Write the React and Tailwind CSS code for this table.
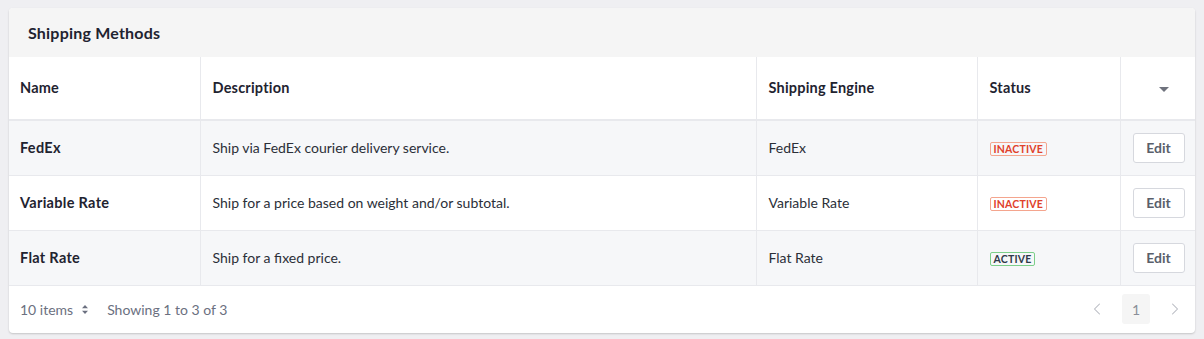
import { ChevronLeft, ChevronRight } from "lucide-react"

const ROWS = [
  { name: "FedEx", desc: "Ship via FedEx courier delivery service.", engine: "FedEx", active: false },
  { name: "Variable Rate", desc: "Ship for a price based on weight and/or subtotal.", engine: "Variable Rate", active: false },
  { name: "Flat Rate", desc: "Ship for a fixed price.", engine: "Flat Rate", active: true },
]

function StatusBadge({ active }) {
  if (active) {
    return (
      <span className="inline-block rounded-[2px] border border-[#7ccf8a] px-[3px] text-[10.5px] leading-[12px] font-bold tracking-[0.2px] text-[#2f3a4a]">
        ACTIVE
      </span>
    )
  }
  return (
    <span className="inline-block rounded-[2px] border border-[#f4a58e] px-[3px] text-[10.5px] leading-[12px] font-bold tracking-[0.2px] text-[#e0412b]">
      INACTIVE
    </span>
  )
}

export default function App() {
  return (
    <div className="min-h-[339px] bg-[#efeff2] pt-2 pl-[9px] pr-[9px]" style={{ fontFamily: "Lato, 'Open Sans', sans-serif" }}>
      <div className="overflow-hidden rounded-[4px] bg-white shadow-[0_1px_2px_rgba(0,0,0,0.18)]">
        <div className="flex h-[49px] items-center bg-[#f5f5f5] px-[19px]">
          <h2 className="text-[16px] font-bold tracking-[0.2px] text-[#1f2330]">Shipping Methods</h2>
        </div>
        <table className="w-full table-fixed border-collapse text-[14px] text-[#2b2f38]">
          <colgroup>
            <col className="w-[191px]" />
            <col className="w-[556px]" />
            <col className="w-[221px]" />
            <col className="w-[143px]" />
            <col />
          </colgroup>
          <thead>
            <tr className="h-[63px] border-b-2 border-[#e8e9ed] text-left">
              <th className="px-[11px] text-[14.5px] font-bold tracking-[0.2px] text-[#1f2330]">Name</th>
              <th className="border-l border-[#e8e9ed] px-3 text-[14.5px] font-bold tracking-[0.2px] text-[#1f2330]">Description</th>
              <th className="border-l border-[#e8e9ed] px-3 text-[14.5px] font-bold tracking-[0.2px] text-[#1f2330]">Shipping Engine</th>
              <th className="border-l border-[#e8e9ed] px-3 text-[14.5px] font-bold tracking-[0.2px] text-[#1f2330]">Status</th>
              <th className="border-l border-[#e8e9ed] px-3 text-center">
                <span className="ml-[12px] inline-block h-0 w-0 border-x-[5px] border-t-[5px] border-x-transparent border-t-[#6f727d] align-middle" />
              </th>
            </tr>
          </thead>
          <tbody>
            {ROWS.map((r, i) => (
              <tr key={r.name} className={`h-[55px] border-b border-[#e8e9ed] ${i % 2 === 0 ? "bg-[#f6f7f9]" : "bg-white"}`}>
                <td className="px-[11px] text-[14.5px] font-bold tracking-[0.3px] text-[#1f2330]">{r.name}</td>
                <td className="border-l border-[#e8e9ed] px-3">{r.desc}</td>
                <td className="border-l border-[#e8e9ed] px-3">{r.engine}</td>
                <td className="border-l border-[#e8e9ed] px-3">
                  <StatusBadge active={r.active} />
                </td>
                <td className="border-l border-[#e8e9ed] px-3 text-center">
                  <button className="h-[30px] w-[52px] rounded-[3px] border border-[#d6d8de] bg-white text-[14px] font-bold text-[#5a5f6b]">
                    Edit
                  </button>
                </td>
              </tr>
            ))}
          </tbody>
        </table>
        <div className="flex h-[47px] items-center justify-between pl-[11px] pr-[10px] text-[14px] text-[#6b7080]">
          <div className="flex items-center">
            <span className="flex items-center gap-[9px]">
              10 items
              <svg width="6" height="9" viewBox="0 0 6 9" className="fill-[#6b7080]">
                <path d="M3 0 L6 3.3 H0 Z M3 9 L0 5.7 H6 Z" />
              </svg>
            </span>
            <span className="ml-[19px]">Showing 1 to 3 of 3</span>
          </div>
          <div className="flex items-center gap-[15px]">
            <ChevronLeft className="h-5 w-5 text-[#b4b7bf]" strokeWidth={1.25} />
            <span className="flex h-[30px] w-[28px] items-center justify-center rounded-[3px] bg-[#f5f5f5] text-[#8a8e98]">1</span>
            <ChevronRight className="h-5 w-5 text-[#b4b7bf]" strokeWidth={1.25} />
          </div>
        </div>
      </div>
    </div>
  )
}
